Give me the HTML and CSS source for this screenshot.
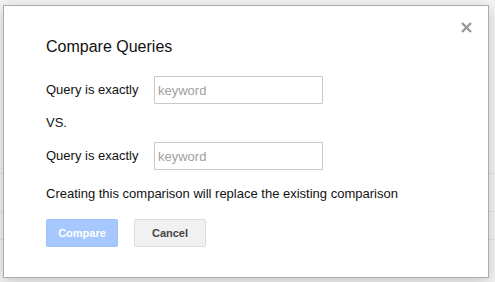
FILE: index.html
```html
<!DOCTYPE html>
<html>
<head>
<meta charset="utf-8">
<link rel="stylesheet" href="styles.css">
</head>
<body>
<div class="page">
  <div class="grid-line gl1"></div>
  <div class="grid-line gl2"></div>
  <div class="grid-line gl3"></div>
</div>
<div class="dialog">
  <button class="close" aria-label="Close">
    <svg width="11" height="11" viewBox="0 0 11 11"><path d="M1 1L10 10M10 1L1 10" stroke="#9a9a9a" stroke-width="2.4" fill="none"/></svg>
  </button>
  <h1 class="title">Compare Queries</h1>
  <div class="row">
    <span class="label">Query is exactly</span>
    <input class="field" type="text" placeholder="keyword">
  </div>
  <div class="vs">VS.</div>
  <div class="row">
    <span class="label">Query is exactly</span>
    <input class="field" type="text" placeholder="keyword">
  </div>
  <p class="note">Creating this comparison will replace the existing comparison</p>
  <div class="actions">
    <button class="btn btn-primary">Compare</button>
    <button class="btn btn-default">Cancel</button>
  </div>
</div>
</body>
</html>
```

FILE: styles.css
```css
html, body {
  margin: 0;
  padding: 0;
}
body {
  width: 495px;
  height: 282px;
  overflow: hidden;
  background: #f4f4f4;
  font-family: Arial, "Liberation Sans", sans-serif;
  color: #111;
  position: relative;
}
.page {
  height: 282px;
  display: flex;
  flex-direction: column;
  padding-top: 173px;
  box-sizing: border-box;
}
.grid-line {
  height: 1px;
  background: #e4e4e4;
}
.gl1 { margin-bottom: 37px; }
.gl2 { margin-bottom: 27px; }

.dialog {
  position: absolute;
  left: 3px;
  top: 5px;
  width: 486px;
  height: 273px;
  box-sizing: border-box;
  background: #fff;
  border: 1px solid #acacac;
  box-shadow: 0 4px 16px rgba(0, 0, 0, 0.2);
  padding: 31px 0 0 42px;
}
.close {
  position: absolute;
  top: 16px;
  right: 16px;
  width: 11px;
  height: 11px;
  padding: 0;
  border: 0;
  background: none;
  display: flex;
}
.title {
  margin: 0;
  font-size: 16px;
  line-height: 20px;
  font-weight: normal;
  color: #111;
}
.row {
  display: flex;
  align-items: center;
  height: 28px;
  font-size: 13px;
  line-height: 16px;
}
.title + .row {
  margin-top: 19px;
}
.label {
  width: 108px;
}
.field {
  width: 169px;
  height: 28px;
  box-sizing: border-box;
  margin: 0;
  border: 1px solid #c8c8c8;
  border-radius: 1px;
  padding: 0 0 0 3px;
  font-family: Arial, "Liberation Sans", sans-serif;
  font-size: 13px;
  color: #111;
  outline: none;
}
.field::placeholder {
  color: #a0a0a0;
}
.vs {
  font-size: 13px;
  line-height: 16px;
  margin: 11px 0 11px;
}
.note {
  margin: 16px 0 0;
  font-size: 13px;
  line-height: 16px;
}
.actions {
  display: flex;
  gap: 16px;
  margin-top: 17px;
}
.btn {
  width: 72px;
  height: 28px;
  box-sizing: border-box;
  border-radius: 2px;
  font-family: Arial, "Liberation Sans", sans-serif;
  font-size: 11px;
  font-weight: bold;
  padding: 0;
}
.btn-primary {
  background: #a6c8fe;
  border: 1px solid #9dc0f8;
  color: #fff;
}
.btn-default {
  background: #f1f1f1;
  border: 1px solid #dcdcdc;
  color: #444;
}
```
